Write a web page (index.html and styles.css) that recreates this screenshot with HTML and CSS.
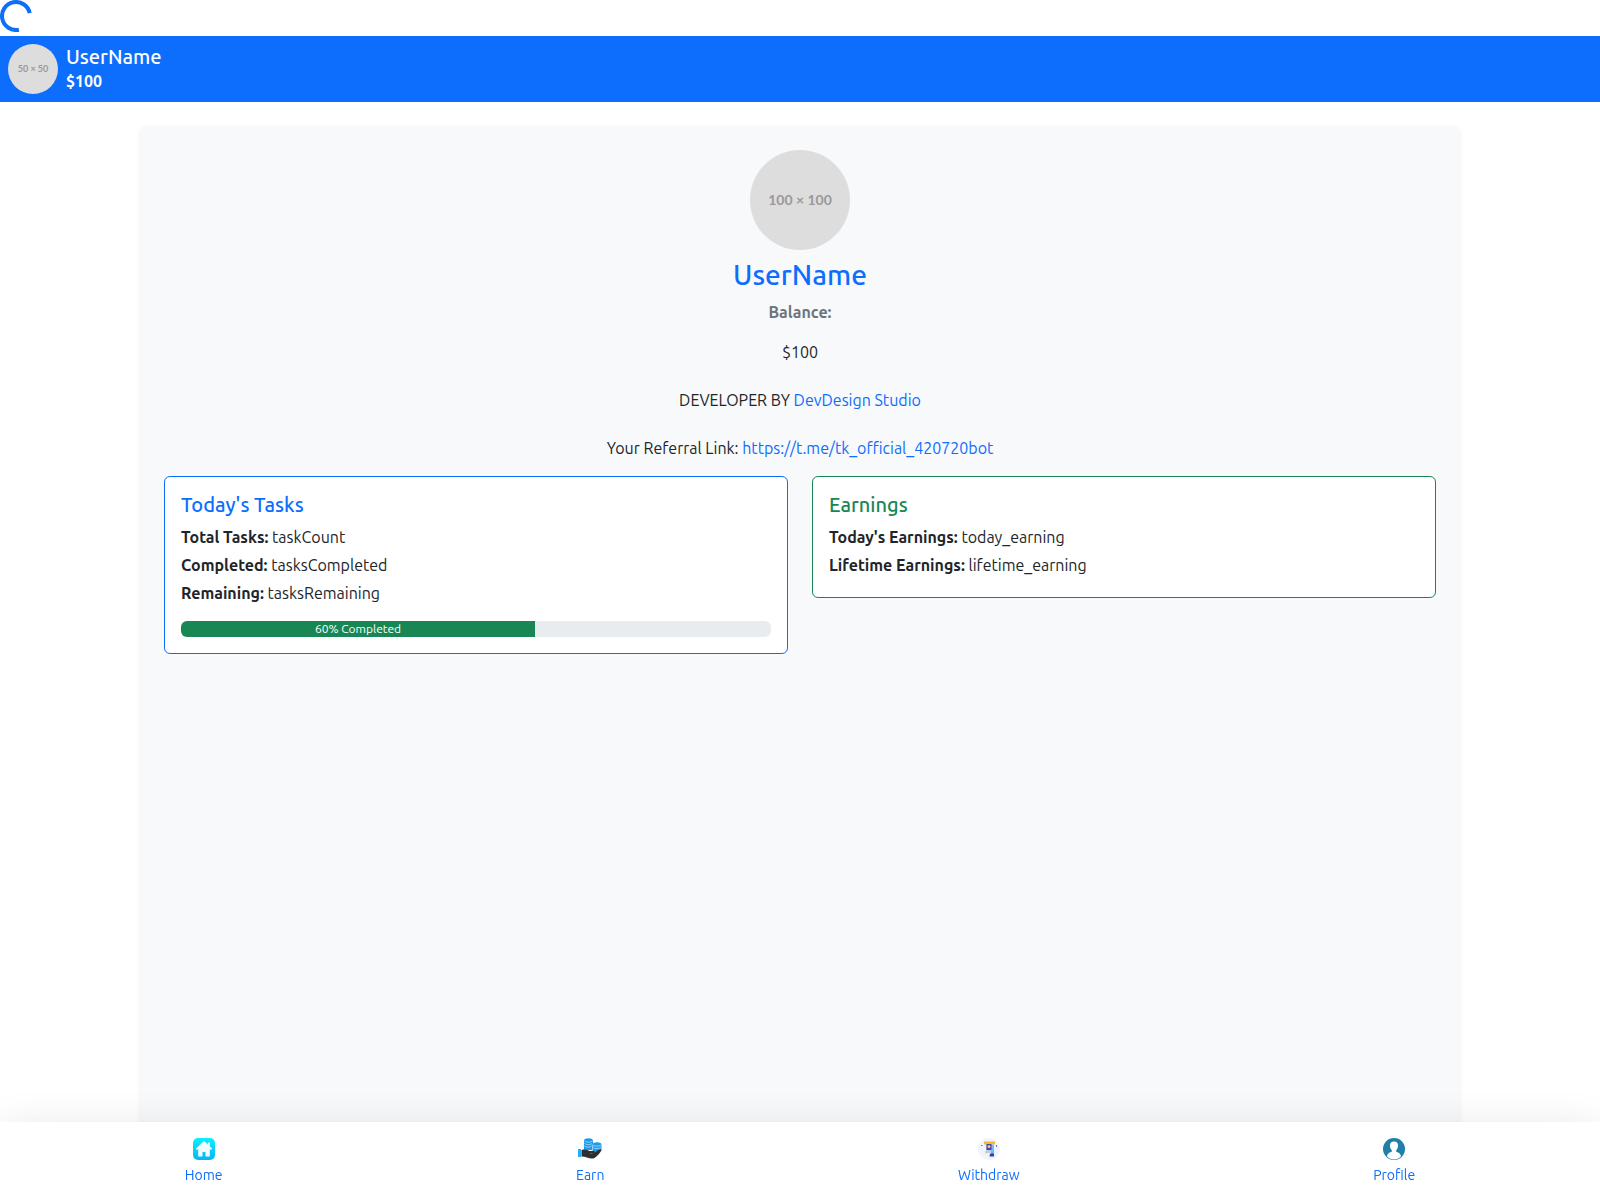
FILE: index.html
```html
<!DOCTYPE html>
<html lang="en">
<head>
<meta charset="utf-8">
<meta name="viewport" content="width=device-width, initial-scale=1">
<title>Profile</title>
<link rel="stylesheet" href="styles.css">
</head>
<body>
<div class="loader" role="status" aria-label="Loading">
  <svg class="spinner" viewBox="0 0 32 32" aria-hidden="true"><path d="M29.7 13.1A14 14 0 1 0 18.9 29.7"/></svg>
</div>

<header class="topbar">
  <div class="avatar avatar-small">50 × 50</div>
  <div>
    <h5 class="topbar-name">UserName</h5>
    <strong class="topbar-balance">$100</strong>
  </div>
</header>

<main class="panel">
  <section class="profile">
    <div class="avatar avatar-large">100 × 100</div>
    <h3 class="profile-name">UserName</h3>
    <p class="balance-label">Balance:</p>
    <p class="profile-line">$100</p>
    <p class="profile-line">DEVELOPER BY <a href="#">DevDesign Studio</a></p>
    <p class="profile-line">Your Referral Link: <a href="#">https://t.me/tk_official_420720bot</a></p>
  </section>
  <section class="cards">
    <article class="card card-tasks">
      <h5 class="card-title">Today's Tasks</h5>
      <p class="stat"><strong>Total Tasks:</strong> taskCount</p>
      <p class="stat"><strong>Completed:</strong> tasksCompleted</p>
      <p class="stat"><strong>Remaining:</strong> tasksRemaining</p>
      <div class="progress" role="progressbar" aria-label="Tasks completed" aria-valuenow="60" aria-valuemin="0" aria-valuemax="100">
        <div class="progress-fill" style="width: 60%">60% Completed</div>
      </div>
    </article>
    <article class="card card-earnings">
      <h5 class="card-title">Earnings</h5>
      <p class="stat"><strong>Today's Earnings:</strong> today_earning</p>
      <p class="stat"><strong>Lifetime Earnings:</strong> lifetime_earning</p>
    </article>
  </section>
</main>

<nav class="bottom-nav">
  <a class="nav-item" href="#">
    <svg class="nav-icon" viewBox="0 0 24 24" aria-hidden="true">
      <defs><linearGradient id="home-fill" x1="0" y1="0" x2="0" y2="1"><stop offset="0" stop-color="#09f1fb"/><stop offset="1" stop-color="#08b4f8"/></linearGradient></defs>
      <rect x="1" y="1" width="22" height="22" rx="5" fill="url(#home-fill)"/>
      <path d="M12 4 3.800 11.700l1.200 1.300 1.200-1V19.500h4.300V15h3v4.500h4.300V12l1.200 1 1.200-1.300L17.800 9.200V5.500h-2V7.400z" fill="#f2fcff"/>
    </svg>
    Home
  </a>
  <a class="nav-item" href="#">
    <svg class="nav-icon" viewBox="0 0 24 24" aria-hidden="true">
      <path d="M6 3.500c0-3 9-3 9 0V7l-1 1.500V13H9l-3-1z" fill="#1d9be8"/>
      <path d="M14.500 7.500c0-3 9-3 9 0V13l-2 2h-7z" fill="#1d9be8"/>
      <g fill="none" stroke="#a5dcfb" stroke-width="0.8"><path d="M6.500 4c2 1.500 6 1.500 8 0M6.500 6.500c2 1.500 6 1.500 7.500 0M6.500 9c2 1.500 5 1.500 7 0M15 8c2 1.500 6 1.500 8 0M15 10.500c2 1.500 6 1.500 8 0"/></g>
      <path d="M0 12h3v8H0z" fill="#22aef4"/>
      <path d="M3.500 13c4-2 6 0 8 1h4c2 0 1.500 2 0 2h-4c4 1 6-1 8-2.500 2-1.300 4-1.500 4-.2-1 2-4 6-7 7.700-4 2-8-1.500-13-1.500z" fill="#302e31"/>
    </svg>
    Earn
  </a>
  <a class="nav-item" href="#">
    <svg class="nav-icon" viewBox="0 0 24 24" aria-hidden="true">
      <circle cx="12" cy="12" r="11" fill="#f0f4ff"/>
      <path d="M7 4.500h11v3H7z" fill="#fbb62c"/>
      <path d="M9 7h8v9H9z" fill="#b4cbfa"/>
      <path d="M14 8h3v9h-3z" fill="#77b9f5"/>
      <path d="M9.500 7h5v6h-5z" fill="#4645a8"/>
      <circle cx="12" cy="9.500" r="1.500" fill="#fcc75d"/>
      <path d="M7.500 13.500l3 2.500-1.500 1z" fill="#ffc257"/>
      <path d="M13 16.500h4v3h-4.500z" fill="#3444a0"/>
      <path d="M4 8h1.500v1H4zM19 8h1v2h-1z" fill="#6c70cf"/>
    </svg>
    Withdraw
  </a>
  <a class="nav-item" href="#">
    <svg class="nav-icon" viewBox="0 0 24 24" aria-hidden="true">
      <circle cx="12" cy="12" r="11" fill="#1e7fa9"/>
      <path d="M12 4.500c-3 0-4.300 2-4 4.800.2 2 1 3.500 2 4.300v1c-2 1-4.300 1.300-5 4.600 3.700 4.400 10.300 4.400 14 0-.7-3.300-3-3.600-5-4.600v-1c1-.8 1.800-2.300 2-4.300.3-2.800-1-4.800-4-4.800z" fill="#fff"/>
    </svg>
    Profile
  </a>
</nav>
</body>
</html>
```
FILE: styles.css
```css
* {
  box-sizing: border-box;
}

body {
  margin: 0;
  background: #fff;
  color: #212529;
  font-family: Ubuntu, "Noto Sans", sans-serif;
  font-size: 16px;
  line-height: 24px;
}

h3,
h5,
p {
  margin: 0;
}

h3,
h5 {
  font-weight: 500;
}

a {
  color: #0d6efd;
  text-decoration: none;
}

.loader {
  height: 36px;
}

.spinner {
  display: block;
  width: 32px;
  height: 32px;
  fill: none;
  stroke: #0d6efd;
  stroke-width: 4;
}

.topbar {
  display: flex;
  align-items: center;
  gap: 8px;
  padding: 8px;
  background: #0d6efd;
  color: #fff;
}

.topbar-name {
  font-size: 20px;
}

.topbar-balance {
  display: block;
}

.avatar {
  display: flex;
  align-items: center;
  justify-content: center;
  border-radius: 50%;
  background: #ddd;
  color: #999;
  font-family: Lato, sans-serif;
  font-weight: 700;
}

.avatar-small {
  width: 50px;
  height: 50px;
  font-size: 9px;
}

.avatar-large {
  width: 100px;
  height: 100px;
  font-size: 14px;
}

.panel {
  max-width: 1320px;
  min-height: 100vh;
  margin: 24px auto 0;
  padding: 24px;
  border-radius: 6px;
  background: #f8f9fa;
  box-shadow: 0 2px 4px rgba(0, 0, 0, 0.075);
}

.profile {
  display: flex;
  flex-direction: column;
  align-items: center;
  text-align: center;
}

.profile-name {
  margin: 8px 0;
  color: #0d6efd;
  font-size: 28px;
  line-height: 34px;
}

.balance-label {
  margin-bottom: 16px;
  color: #6c757d;
  font-weight: 700;
}

.profile-line + .profile-line {
  margin-top: 24px;
}

.cards {
  display: grid;
  grid-template-columns: repeat(auto-fit, minmax(320px, 1fr));
  align-items: start;
  gap: 24px;
  margin-top: 16px;
}

.card {
  padding: 16px;
  border: 1px solid;
  border-radius: 6px;
  background: #fff;
}

.card-tasks {
  border-color: #0d6efd;
}

.card-earnings {
  border-color: #198754;
}

.card-title {
  margin-bottom: 8px;
  font-size: 20px;
}

.card-tasks .card-title {
  color: #0d6efd;
}

.card-earnings .card-title {
  color: #198754;
}

.stat {
  margin-bottom: 4px;
}

.progress {
  height: 16px;
  margin-top: 16px;
  overflow: hidden;
  border-radius: 6px;
  background: #e9ecef;
}

.progress-fill {
  background: #198754;
  color: #fff;
  font-size: 12px;
  line-height: 16px;
  text-align: center;
}

.bottom-nav {
  position: fixed;
  right: 0;
  bottom: 0;
  left: 0;
  display: flex;
  justify-content: space-around;
  padding: 15px 8px 14px;
  background: #fff;
  box-shadow: 0 16px 48px rgba(0, 0, 0, 0.175);
}

.nav-item {
  display: flex;
  flex-direction: column;
  align-items: center;
  gap: 4px;
  font-size: 14px;
  line-height: 21px;
}

.nav-icon {
  width: 24px;
  height: 24px;
}
```
